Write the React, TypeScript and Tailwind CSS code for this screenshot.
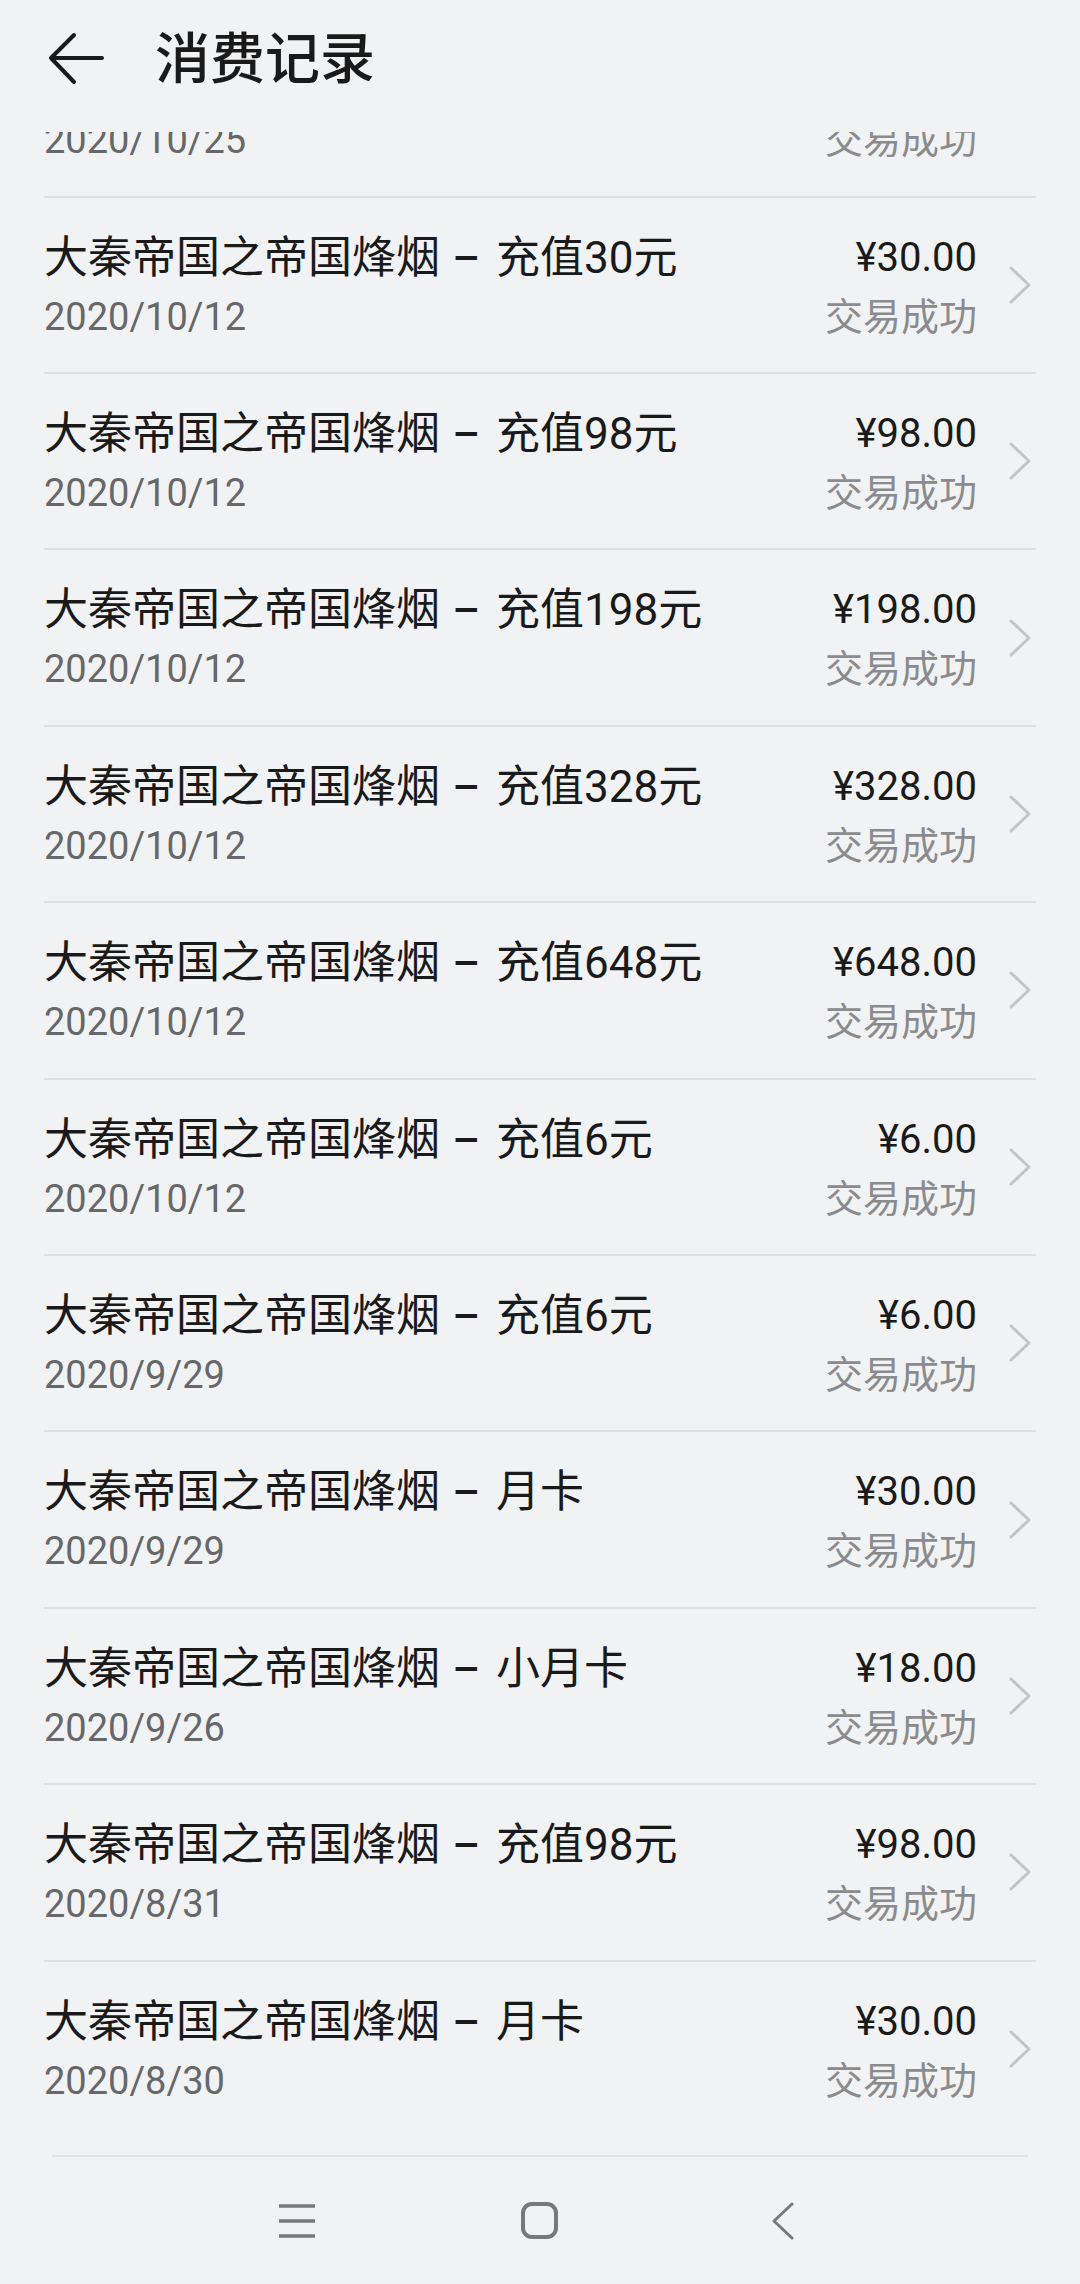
import React from "react";

type Row = { name: string; amount: string; date: string };

const rows: Row[] = [
  { name: "充值6元", amount: "¥6.00", date: "2020/10/25" },
  { name: "充值30元", amount: "¥30.00", date: "2020/10/12" },
  { name: "充值98元", amount: "¥98.00", date: "2020/10/12" },
  { name: "充值198元", amount: "¥198.00", date: "2020/10/12" },
  { name: "充值328元", amount: "¥328.00", date: "2020/10/12" },
  { name: "充值648元", amount: "¥648.00", date: "2020/10/12" },
  { name: "充值6元", amount: "¥6.00", date: "2020/10/12" },
  { name: "充值6元", amount: "¥6.00", date: "2020/9/29" },
  { name: "月卡", amount: "¥30.00", date: "2020/9/29" },
  { name: "小月卡", amount: "¥18.00", date: "2020/9/26" },
  { name: "充值98元", amount: "¥98.00", date: "2020/8/31" },
  { name: "月卡", amount: "¥30.00", date: "2020/8/30" },
];

const font = "font-['Roboto','Noto_Sans_CJK_SC',sans-serif]";

function Chevron() {
  return (
    <svg width="24" height="38" viewBox="0 0 24 38" className="shrink-0">
      <path d="M3 2 L21 19 L3 36" fill="none" stroke="#c3c4c6" strokeWidth="3" strokeLinecap="round" strokeLinejoin="round" />
    </svg>
  );
}

function RecordRow({ r, hidden }: { r: Row; hidden?: boolean }) {
  return (
    <div className="h-[176.4px] border-t-2 border-[#dfe0e2] flex items-stretch">
      <div className="flex-1 flex flex-col pt-[30px] min-w-0">
        <div className={`text-[44px] leading-[60px] text-[#1a1a1a] whitespace-nowrap ${hidden ? "invisible" : ""}`}>
          大秦帝国之帝国烽烟<span className="inline-block w-[56px] pr-[4px] text-center text-[43px] font-medium">–</span>{r.name}
        </div>
        <div className="text-[38px] leading-[58px] text-[#666769] whitespace-nowrap">{r.date}</div>
      </div>
      <div className="flex flex-col items-end pt-[30px]">
        <div className={`text-[40px] leading-[60px] text-[#1a1a1a] whitespace-nowrap ${hidden ? "invisible" : ""}`}>{r.amount}</div>
        <div className="text-[38px] leading-[58px] text-[#8a8b8d] whitespace-nowrap">交易成功</div>
      </div>
      <div className="flex items-center ml-[31px] pr-[4px]">
        <Chevron />
      </div>
    </div>
  );
}

export default function App() {
  return (
    <div className={`w-[1080px] h-[2284px] bg-[#f1f2f4] flex flex-col overflow-hidden ${font}`}>
      <header className="h-[132px] shrink-0 relative z-10 bg-[#f1f2f4]">
        <div className="h-[118px] flex items-center pl-[48px]">
          <svg width="56" height="54" viewBox="0 0 56 54" className="shrink-0">
            <path d="M54 26 H3 M26 3 L3 26 L26 50" fill="none" stroke="#1a1a1a" strokeWidth="4" strokeLinecap="round" strokeLinejoin="round" />
          </svg>
          <h1 className="ml-[51px] text-[55px] leading-[64px] font-medium text-[#1a1a1a]">消费记录</h1>
        </div>
      </header>
      <main className="flex-1 overflow-hidden">
        <div className="mt-[-112.8px] mx-[44px]">
          {rows.map((r, i) => (
            <RecordRow key={i} r={r} hidden={i === 0} />
          ))}
        </div>
      </main>
      <nav className="h-[129px] shrink-0 mx-[52px] border-t-2 border-[#e3e4e6] flex items-center justify-center gap-[183px]">
        <div className="w-[60px] flex justify-center">
          <svg width="40" height="36" viewBox="0 0 40 36">
            <path d="M2 3 H38 M2 18 H38 M2 33 H38" stroke="#77787a" strokeWidth="3.5" fill="none" />
          </svg>
        </div>
        <div className="w-[60px] flex justify-center">
          <svg width="40" height="40" viewBox="0 0 40 40">
            <rect x="3" y="3" width="33" height="33" rx="9" stroke="#77787a" strokeWidth="4" fill="none" />
          </svg>
        </div>
        <div className="w-[60px] flex justify-center">
          <svg width="24" height="38" viewBox="0 0 24 38">
            <path d="M21 2 L3 19 L21 36" stroke="#77787a" strokeWidth="3" fill="none" strokeLinecap="round" strokeLinejoin="round" />
          </svg>
        </div>
      </nav>
    </div>
  );
}
